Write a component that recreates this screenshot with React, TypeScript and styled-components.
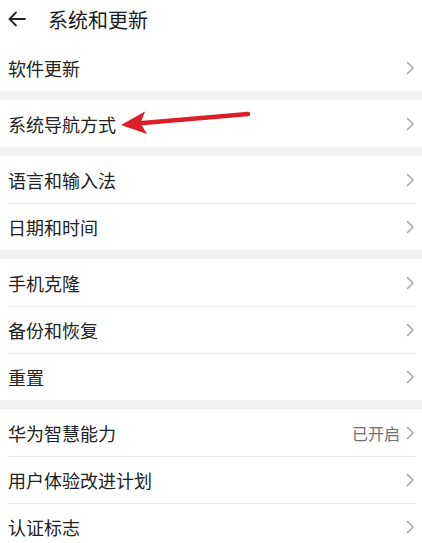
import React from 'react'
import styled, { createGlobalStyle } from 'styled-components'

const GlobalStyle = createGlobalStyle`
  html, body {
    margin: 0;
    padding: 0;
    background: #fff;
  }
  body {
    font-family: "Noto Sans CJK SC", "Noto Sans", sans-serif;
    color: #222;
  }
`

type Item = { label: string; value?: string; marked?: boolean }

const groups: Item[][] = [
  [{ label: '软件更新' }],
  [{ label: '系统导航方式', marked: true }],
  [{ label: '语言和输入法' }, { label: '日期和时间' }],
  [{ label: '手机克隆' }, { label: '备份和恢复' }, { label: '重置' }],
  [{ label: '华为智慧能力', value: '已开启' }, { label: '用户体验改进计划' }, { label: '认证标志' }],
]

const Chevron = () => (
  <svg width="9" height="14" viewBox="0 0 9 14">
    <path d="M1.5 1.5 L7 7 L1.5 12.5" fill="none" stroke="#a6a6a6" strokeWidth="1.5" strokeLinecap="round" strokeLinejoin="round" />
  </svg>
)

// 赤い注釈の矢印
const RedArrow = () => (
  <Annotation width="135" height="32" viewBox="0 0 135 32">
    <line x1="22" y1="16.3" x2="130" y2="7" stroke="#dc1f26" strokeWidth="4.5" strokeLinecap="round" />
    <polygon points="3,18 27,4.5 22.5,16.3 29,27" fill="#dc1f26" />
  </Annotation>
)

export default function App() {
  return (
    <Page>
      <GlobalStyle />
      <Header>
        <BackButton>
          <svg width="18" height="16" viewBox="0 0 18 16">
            <path d="M17 8 H2 M8 1.5 L1.5 8 L8 14.5" fill="none" stroke="#222" strokeWidth="1.8" strokeLinecap="round" strokeLinejoin="round" />
          </svg>
        </BackButton>
        <Title>系统和更新</Title>
      </Header>

      {groups.map((group, gi) => (
        <React.Fragment key={gi}>
          {gi > 0 && <Band />}
          <Group>
            {group.map((item, i) => (
              <Row key={item.label} $divider={i > 0}>
                <Label>{item.label}</Label>
                {item.marked && <RedArrow />}
                <Trail>
                  {item.value && <Value>{item.value}</Value>}
                  <Chevron />
                </Trail>
              </Row>
            ))}
          </Group>
        </React.Fragment>
      ))}
    </Page>
  )
}

const Page = styled.div`
  width: 422px;
  background: #fff;
  overflow: hidden;
`
const Header = styled.div`
  display: flex;
  align-items: center;
  height: 38px;
  padding: 0 0 6px 8px;
`
const BackButton = styled.div`
  display: flex;
  align-items: center;
  width: 40px;
`
const Title = styled.h1`
  margin: 0;
  font-size: 20px;
  font-weight: 400;
  color: #1a1a1a;
  letter-spacing: 0;
`
const Band = styled.div`
  height: 9px;
  background: #f1f1f1;
`
const Group = styled.div`
  background: #fff;
`
const Row = styled.div<{ $divider: boolean }>`
  position: relative;
  display: flex;
  align-items: center;
  height: 47px;
  padding: 0 7px 0 8px;

  &::before {
    content: '';
    display: ${({ $divider }) => ($divider ? 'block' : 'none')};
    position: absolute;
    top: 0;
    left: 8px;
    right: 7px;
    height: 1px;
    background: #ebebeb;
  }
`
const Label = styled.span`
  flex: 1;
  font-size: 18px;
  color: #222;
`
const Trail = styled.div`
  display: flex;
  align-items: center;
  gap: 6px;
`
const Value = styled.span`
  font-size: 16px;
  color: #6e6e6e;
`
const Annotation = styled.svg`
  position: absolute;
  left: 118px;
  top: 7px;
`
